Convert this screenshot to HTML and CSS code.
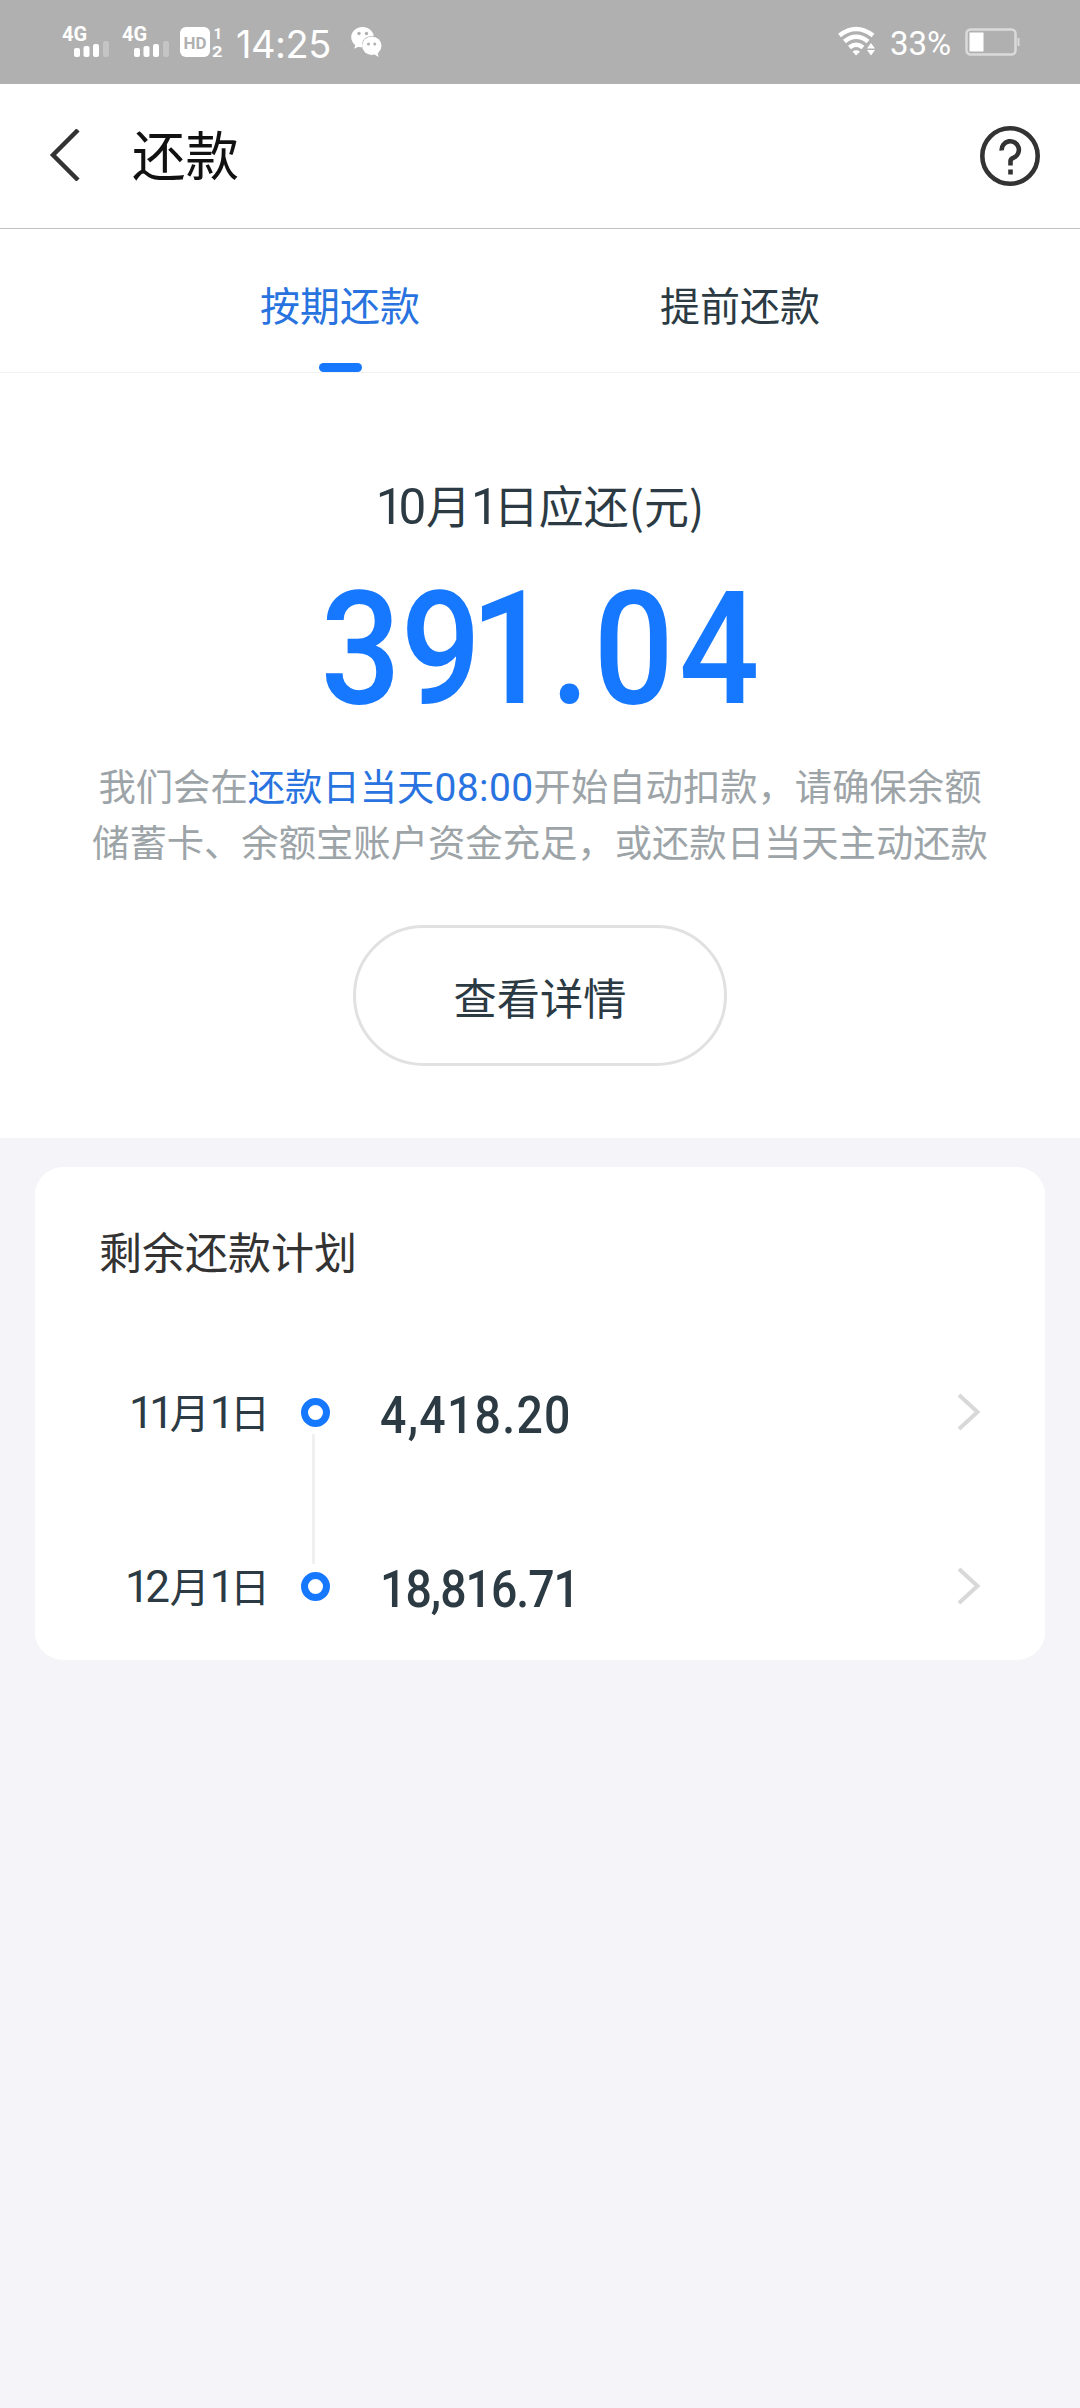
FILE: index.html
```html
<!DOCTYPE html>
<html lang="zh-CN">
<head>
<meta charset="utf-8">
<title>还款</title>
<link rel="stylesheet" href="styles.css">
</head>
<body>
<div class="status">
  <div class="status-left">
    <div class="signal">
      <span class="net">4G</span>
      <svg class="bars" width="36" height="17" viewBox="0 0 36 17">
        <rect x="0" y="8" width="6" height="9" rx="2"/><rect x="9.500" y="6" width="6" height="11" rx="2"/><rect x="19" y="4" width="6" height="13" rx="2"/><rect x="29" y="1" width="6" height="16" rx="2" opacity=".25"/>
      </svg>
    </div>
    <div class="signal">
      <span class="net">4G</span>
      <svg class="bars" width="36" height="17" viewBox="0 0 36 17">
        <rect x="0" y="8" width="6" height="9" rx="2"/><rect x="9.500" y="6" width="6" height="11" rx="2"/><rect x="19" y="4" width="6" height="13" rx="2"/><rect x="29" y="1" width="6" height="16" rx="2" opacity=".25"/>
      </svg>
    </div>
    <svg class="hd" width="44" height="34" viewBox="0 0 44 34">
      <rect x="0" y="2" width="30" height="30" rx="6"/>
      <text class="hd-text" x="3.500" y="23.500" textLength="23" lengthAdjust="spacingAndGlyphs">HD</text>
      <text class="hd-num" x="33.500" y="13.500">1</text>
      <text class="hd-num" x="32" y="31.500" textLength="10.500" lengthAdjust="spacingAndGlyphs">2</text>
    </svg>
    <span class="clock">14:25</span>
    <svg class="wechat" width="32" height="34" viewBox="0 0 32 34">
      <path d="M12 2C5.200 2 .2 6.500.2 12.300c0 3.200 1.600 5.800 4 7.700L3.200 23.800l4.300-2.100c1.400.4 2.600.6 4 .5C9.700 16 14 10.700 22.800 10.700 21.600 5.600 17.300 2 12 2z"/>
      <ellipse cx="20.800" cy="20.800" rx="9.700" ry="9.200"/>
      <path d="M23 29l4.500 3-1-5z"/>
      <g fill="#b0b0b0"><circle cx="8" cy="8.500" r="1.700"/><circle cx="15.500" cy="8.500" r="1.700"/><circle cx="17.500" cy="19" r="1.500"/><circle cx="23.800" cy="19" r="1.500"/></g>
    </svg>
  </div>
  <div class="status-right">
    <svg width="40" height="32" viewBox="0 0 40 32">
      <g fill="none" stroke="#fff" stroke-width="4.600"><path d="M1.500 9.500Q18 -3.500 35 9.500"/><path d="M6.500 15.500Q18 6 30 15.500"/><path d="M11.500 21.500Q18 16 25 21.500"/></g>
      <path d="M14.500 25.500q3.500-2.500 7.500 0L18 29.500z"/><path d="M29 22.500l4-5.500 4 5.500zM29 24l4 5.500 4-5.500z"/>
    </svg>
    <span class="percent">33%</span>
    <svg width="55" height="28" viewBox="0 0 55 28">
      <rect x="1.500" y="1.500" width="49" height="25" rx="4" fill="none" stroke="#dadada" stroke-width="2.500"/>
      <rect x="4.500" y="4.500" width="14" height="19"/><rect x="52.500" y="10" width="2" height="8" fill="#dadada"/>
    </svg>
  </div>
</div>

<header class="header">
  <svg class="back" width="32" height="52" viewBox="0 0 32 52"><path d="M29 1L4 26l25 25" fill="none" stroke="#333" stroke-width="4.500"/></svg>
  <h1 class="title">还款</h1>
  <svg class="help" width="60" height="60" viewBox="0 0 60 60" fill="none" stroke="#333" stroke-width="4.600">
    <circle cx="30" cy="30" r="27.700"/>
    <path d="M21.700 24.500a8.600 8.600 0 1 1 12 7.200q-3.200 1.300-3.200 3.300v4.500"/><path d="M30.500 43.500v5"/>
  </svg>
</header>

<nav class="tabs">
  <div class="tab tab-active">按期还款</div>
  <div class="tab">提前还款</div>
</nav>

<section class="due">
  <div class="due-label"><span class="num one">1</span><span class="num">0</span>月<span class="num one">1</span>日应还(元)</div>
  <div class="due-amount">3<span class="tight">9</span>1<span class="point">.</span><span class="loose">0</span>4</div>
  <p class="note">我们会在<span class="note-time">还款日当天<span class="time">08:00</span></span>开始自动扣款，请确保余额<br>储蓄卡、余额宝账户资金充足，或还款日当天主动还款</p>
  <div class="button">查看详情</div>
</section>

<section class="card">
  <h2 class="card-title">剩余还款计划</h2>
  <div class="row">
    <div class="date"><span class="num one">1</span><span class="num one">1</span>月<span class="num one">1</span>日</div>
    <div class="marker"></div>
    <div class="amount first">4,418.20</div>
    <svg class="chevron" width="24" height="38" viewBox="0 0 24 38"><path d="M2 2l18.500 17L2 36" fill="none" stroke="#d8d8d8" stroke-width="4"/></svg>
  </div>
  <div class="connector"></div>
  <div class="row">
    <div class="date"><span class="num one">1</span><span class="num">2</span>月<span class="num one">1</span>日</div>
    <div class="marker"></div>
    <div class="amount second">18,816.71</div>
    <svg class="chevron" width="24" height="38" viewBox="0 0 24 38"><path d="M2 2l18.500 17L2 36" fill="none" stroke="#d8d8d8" stroke-width="4"/></svg>
  </div>
</section>
</body>
</html>
```
FILE: styles.css
```css
* { box-sizing: border-box; }
body {
  margin: 0;
  width: 1080px;
  min-height: 2408px;
  background: #f4f4f9;
  color: #2b3a43;
  font-family: "Noto Sans CJK SC", sans-serif;
}
h1, h2, p { margin: 0; font-weight: 400; }
svg { display: block; flex: none; }

.status {
  height: 84px;
  background: #b0b0b0;
  color: #fff;
  display: flex;
  justify-content: space-between;
  padding: 0 60px 0 62px;
  font-family: Roboto, sans-serif;
}
.status svg { fill: #fff; }
.status-left, .status-right { display: flex; align-items: center; }
.signal { width: 60px; height: 34px; }
.net { display: block; height: 15px; font: 700 20px/18px Roboto, sans-serif; }
.bars { margin-left: 12px; }
.hd { margin-left: -2px; }
.hd-text { font: 700 17px Roboto, sans-serif; fill: #b0b0b0; }
.hd-num { font: 700 15px Roboto, sans-serif; }
.clock { width: 96px; margin-left: 12px; font: 400 38px/84px Inter, sans-serif; white-space: nowrap; letter-spacing: -0.5px; padding-top: 3px; }
.wechat { margin-left: 19px; }
.percent { width: 66px; margin: 3px 9px 0 12px; font: 400 33px/84px Roboto, sans-serif; }

.header {
  height: 145px;
  background: #fff;
  border-bottom: 1px solid #c0c0c0;
  display: flex;
  align-items: center;
  padding: 0 39px 0 49px;
}
.back { margin-top: -2px; }
.title { flex: 1; margin-left: 51px; font-size: 53.5px; line-height: 80px; color: #111; margin-top: -7px; }
.help { margin-right: 1px; }

.tabs {
  height: 144px;
  background: #fff;
  border-bottom: 1px solid #f2f2f2;
  display: flex;
  padding: 0 140px;
}
.tab {
  flex: 1;
  display: flex;
  flex-direction: column;
  align-items: center;
  font-size: 40px;
  line-height: 58px;
  padding-top: 46px;
}
.tab-active { color: #2873e0; }
.tab-active::after {
  content: "";
  width: 43px;
  height: 9px;
  margin-top: 30px;
  border-radius: 5px;
  background: #1677ff;
}

.due {
  height: 765px;
  background: #fff;
  display: flex;
  flex-direction: column;
  align-items: center;
  padding-top: 99px;
}
.num { font-family: Roboto, sans-serif; font-size: 1.1em; line-height: 1; letter-spacing: -0.01em; font-weight: 400; }
.one { letter-spacing: -0.1em; }
.due-label { font-size: 45px; line-height: 66px; height: 66px; }
.due-amount {
  height: 170px;
  line-height: 170px;
  margin-top: 26px;
  font-family: Roboto, sans-serif;
  font-size: 157px;
  font-weight: 500;
  color: #1677ff;
  transform: scaleX(.9);
  white-space: nowrap;
}
.tight { letter-spacing: -12px; }
.point { letter-spacing: 4px; }
.loose { letter-spacing: 6px; }
.note { margin-top: 23px; text-align: center; font-size: 37.35px; line-height: 56px; color: #9da4a8; white-space: nowrap; }
.note-time { color: #2873e0; }
.time { font-family: Roboto, sans-serif; font-size: 39px; line-height: 1; letter-spacing: 0.4px; }
.button {
  width: 374px;
  height: 141px;
  margin-top: 56px;
  border: 3px solid #e1e1e1;
  border-radius: 71px;
  text-align: center;
  font-size: 43.2px;
  line-height: 136px;
}

.card {
  width: 1010px;
  height: 493px;
  margin: 29px 0 0 35px;
  padding: 52px 65px 0 64px;
  background: #fff;
  border-radius: 28px;
}
.card-title { font-size: 43px; line-height: 62px; color: #333; }
.row { display: flex; align-items: center; height: 44px; }
.card-title + .row { margin-top: 109px; }
.date { width: 171px; text-align: right; font-size: 40px; line-height: 44px; }
.marker { width: 29px; height: 29px; margin-left: 31px; border: 7px solid #1677ff; border-radius: 50%; }
.amount {
  flex: 1;
  margin-left: 50px;
  font: 500 51px/44px Roboto, sans-serif;
  transform: scaleX(.91);
  transform-origin: left;
  padding-top: 7px;
}
.first { letter-spacing: 1.4px; }
.second { letter-spacing: -1.1px; }
.connector { width: 3px; height: 130px; margin: 0 0 0 213px; background: #f0f0f0; }
.chevron { margin-right: -1px; }
```
